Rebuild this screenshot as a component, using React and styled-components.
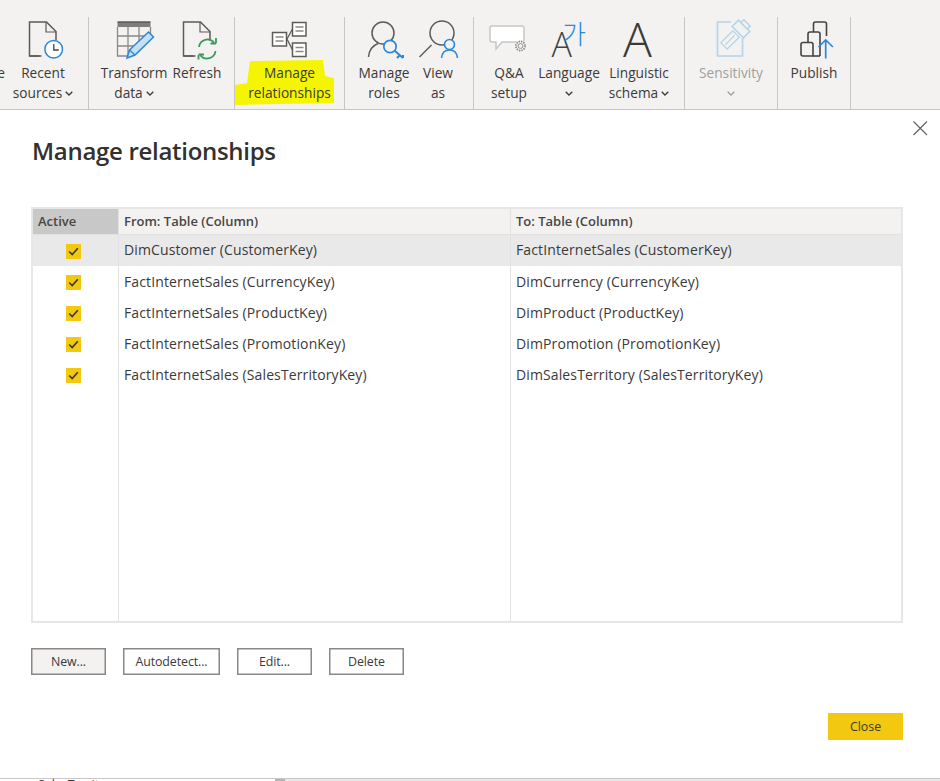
import React from "react";
import styled, { createGlobalStyle } from "styled-components";

const Global = createGlobalStyle`
  html, body { margin: 0; padding: 0; background: #fff; }
  body { font-family: "Open Sans", "Noto Sans", "Liberation Sans", sans-serif; }
  * { box-sizing: border-box; }
`;

const Page = styled.div`
  width: 940px; height: 781px; overflow: hidden;
  display: flex; flex-direction: column;
`;
const Ribbon = styled.div`
  height: 110px; flex: none; display: flex; align-items: flex-end;
  background: #f3f2f1; border-bottom: 1px solid #c8c6c4;
`;
const Group = styled.div`
  height: 92px; width: ${p => p.$w}px; flex: none;
  display: flex; padding-left: ${p => p.$pad || 0}px;
  border-right: 1px solid #c8c6c4; overflow: hidden;
`;
const Item = styled.div`
  position: relative; flex: none; width: ${p => p.$w}px;
  margin-right: ${p => p.$gap || 0}px;
  display: flex; flex-direction: column; align-items: center;
`;
const IconSvg = styled.svg`
  display: block; flex: none; position: relative; z-index: 1;
  overflow: visible;
`;
const Label = styled.div`
  position: relative; z-index: 1; margin-top: 2.5px;
  font-size: 13.7px; line-height: 20.5px; white-space: nowrap; text-align: center;
  color: ${p => (p.$muted ? "#a19f9d" : "#3b3a39")};
  display: flex; flex-direction: column; align-items: center;
`;
const Line = styled.span`
  display: flex; align-items: center; gap: 3px; height: 20.5px;
`;
const Cut = styled.div`
  flex: none; width: 5px; overflow: hidden; direction: rtl; margin-right: 5px;
  padding-top: 45.5px; font-size: 13.7px; line-height: 20.5px; color: #3b3a39;
`;
const Highlight = styled.svg`
  position: absolute; left: -2px; top: 43px; z-index: 0;
`;
const Dialog = styled.div`
  position: relative; flex: 1; min-height: 0; background: #fff;
  padding: 24px 37px 0 31px; display: flex; flex-direction: column;
`;
const CloseX = styled.svg`
  position: absolute; top: 10px; right: 12px;
`;
const Title = styled.h1`
  margin: 0 0 0 1px; font-size: 24px; line-height: 34px; font-weight: 600;
  letter-spacing: -0.3px; color: #323130;
`;
const Table = styled.div`
  margin-top: 39px; height: 416px; border: 2px solid #e6e6e6;
  display: grid; grid-template-columns: 86px 392px 1fr;
  grid-template-rows: 26px repeat(5, 31px) 1fr;
`;
const Head = styled.div`
  background: ${p => (p.$active ? "#c8c8c8" : "#f3f2f1")};
  border-right: ${p => (p.$last ? "none" : "1px solid #e1e1e1")};
  border-bottom: 1px solid #e1e1e1;
  padding-left: 5px;
  font-size: 13px; font-weight: 600; line-height: 25px; color: #484644;
`;
const Cell = styled.div`
  background: ${p => (p.$sel ? "#e9e9e9" : "#fff")};
  border-right: ${p => (p.$last ? "none" : "1px solid #e1e1e1")};
  padding-left: 5px; font-size: 14px; line-height: ${p => (p.$sel ? 30 : 32)}px; color: #3b3a39;
  white-space: nowrap; letter-spacing: 0.12px;
`;
const CheckCell = styled(Cell)`
  padding: 0; display: flex; align-items: center; justify-content: center;
`;
const Check = styled.div`
  width: 15px; height: 15px; background: #f2c811; margin: 2px 4px 0 0;
  display: flex; align-items: center; justify-content: center;
`;
const Filler = styled.div`
  border-right: ${p => (p.$last ? "none" : "1px solid #e1e1e1")};
`;
const Buttons = styled.div`
  margin-top: 25px; display: flex; gap: 17px;
`;
const Btn = styled.button`
  width: ${p => p.$w}px; height: 27px; padding: 0; flex: none;
  background: ${p => (p.$primary ? "#f3f2f1" : "#fff")};
  border: 1px solid #8a8886; box-shadow: inset 0 0 0 0.5px #8a8886;
  font: 12.4px "Open Sans", sans-serif; color: #3b3a39; letter-spacing: -0.1px;
`;
const Footer = styled.div`
  margin-top: 38px; display: flex; justify-content: flex-end;
`;
const CloseBtn = styled.button`
  width: 75px; height: 27px; padding: 0; border: none; background: #f2c811;
  font: 12.4px "Open Sans", sans-serif; color: #3b3a39;
`;
const BottomStrip = styled.div`
  height: 3px; flex: none; overflow: hidden; display: flex;
  border-top: 1px solid #c8c6c4; background: #fff;
`;
const BottomText = styled.div`
  width: 275px; padding-left: 38px; font-size: 12.4px; line-height: 14px; color: #3b3a39;
  margin-top: -1px; white-space: nowrap;
`;
const BottomThumb = styled.div`width: 10px; background: #b5b5b5;`;
const BottomTrack = styled.div`flex: 1; background: #e8e8e8;`;

const Ic = ({ x, w, children }) => (
  <IconSvg width={w} height={43} viewBox={`${x} 17 ${w} 43`} fill="none">
    {children}
  </IconSvg>
);

const Chevron = ({ color = "#3b3a39" }) => (
  <svg width="8" height="5" viewBox="0 0 8 5" fill="none">
    <path d="M.7.7 4 4 7.3.7" stroke={color} strokeWidth="1.3" />
  </svg>
);

const G = "#5c5b5a";
const B = "#2b88d8";

const Doc = ({ x }) => (
  <>
    <path d={`M${x + 10} 56H${x}V22h17l9.500 9.500v9`} stroke={G} strokeWidth="1.500" />
    <path d={`M${x + 16.500} 22v10h10`} stroke={G} strokeWidth="1.200" />
    <path d={`M${x} 56h12`} stroke={G} strokeWidth="1.500" />
  </>
);

const Row = ({ from, to, sel }) => (
  <>
    <CheckCell $sel={sel}>
      <Check>
        <svg width="11" height="9" viewBox="0 0 11 9" fill="none">
          <path d="M1.200 4.500 4.200 7.500 9.800 1.200" stroke="#3b3a39" strokeWidth="1.700" />
        </svg>
      </Check>
    </CheckCell>
    <Cell $sel={sel}>{from}</Cell>
    <Cell $sel={sel} $last>{to}</Cell>
  </>
);

export default function App() {
  return (
    <Page>
      <Global />
      <Ribbon>
        <Group $w={89}>
          <Cut>e</Cut>
          <Item $w={66}>
            <Ic x={10} w={66}>
              <Doc x={29.500} />
              <circle cx="53.700" cy="49.300" r="8.800" stroke={B} strokeWidth="1.500" fill="#fff" />
              <path d="M53.800 44v6h5" stroke="#444" strokeWidth="1.300" />
            </Ic>
            <Label>
              <Line>Recent</Line>
              <Line>sources<Chevron /></Line>
            </Label>
          </Item>
        </Group>

        <Group $w={146} $pad={12}>
          <Item $w={66} $gap={6}>
            <Ic x={101} w={66}>
              <rect x="117.500" y="22" width="33" height="5" fill="#7f7e7d" />
              <path d="M117.500 27v29H128M150.500 27v8M117.500 36H146M117.500 46H136M128 27v28M139 27v19" stroke="#8a8988" strokeWidth="1.300" />
              <path d="M117.500 22h33" stroke={G} strokeWidth="1.500" />
              <path d="m129.500 50 19-18 5 5-18.500 18-8 3z" fill="#c7e0f4" stroke={B} strokeWidth="1.500" />
              <path d="m129.500 50 5.500 5" stroke={B} strokeWidth="1.300" />
            </Ic>
            <Label>
              <Line>Transform</Line>
              <Line>data<Chevron /></Line>
            </Label>
          </Item>
          <Item $w={48}>
            <Ic x={173} w={48}>
              <Doc x={183.500} />
              <path d="M199 47a8.500 8.500 0 0 1 15-4.500M216 43.500V38M216 43.500h-5.500" stroke="#3a9a5b" strokeWidth="1.800" />
              <path d="M215.500 51a8.500 8.500 0 0 1-15 4.500M198.500 55v4.500M198.500 54.500h5.500" stroke="#3a9a5b" strokeWidth="1.800" />
            </Ic>
            <Label>
              <Line>Refresh</Line>
            </Label>
          </Item>
        </Group>

        <Group $w={110}>
          <Item $w={109}>
            <Highlight width="104" height="46" viewBox="0 0 104 46">
              <path d="M17 1 90 0 92 16 101 18 101 43 1 45 2 25 14 23Z" fill="#f5f500" />
            </Highlight>
            <Ic x={235} w={109}>
              <g stroke={G} strokeWidth="1.500" fill="#fff">
                <rect x="272.500" y="32.500" width="14" height="13.500" />
                <rect x="292.500" y="22.500" width="13.500" height="13.500" />
                <rect x="292.500" y="43" width="13.500" height="13.500" />
              </g>
              <path d="M287 39l5.500-10M287 39l5.500 11" stroke={G} strokeWidth="1.300" />
              <path d="M275.500 37h8M275.500 41h8M295.500 27h8M295.500 31h8M295.500 47.500h8M295.500 51.500h8" stroke="#8a8988" strokeWidth="1.300" />
            </Ic>
            <Label>
              <Line>Manage</Line>
              <Line>relationships</Line>
            </Label>
          </Item>
        </Group>

        <Group $w={129} $pad={12}>
          <Item $w={54} $gap={7}>
            <Ic x={357} w={54}>
              <circle cx="383" cy="33" r="11" stroke={G} strokeWidth="1.500" />
              <path d="M368.500 57c.5-7 4.500-11.500 9.500-13.500" stroke={G} strokeWidth="1.500" />
              <path d="M394 50.500 403 58" stroke="#f3f2f1" strokeWidth="5" />
              <circle cx="390" cy="46.500" r="6.200" fill="#f3f2f1" stroke={B} strokeWidth="1.700" />
              <path d="m394.500 50.500 8.500 7.500M399.500 55.500l-2.500 2.500M403 58v-3" stroke={B} strokeWidth="2" />
            </Ic>
            <Label>
              <Line>Manage</Line>
              <Line>roles</Line>
            </Label>
          </Item>
          <Item $w={40}>
            <Ic x={418} w={40}>
              <circle cx="442" cy="33" r="12" stroke={G} strokeWidth="1.500" />
              <path d="m419.500 57 12-12" stroke={G} strokeWidth="1.500" />
              <circle cx="449.500" cy="44.500" r="5" fill="#f3f2f1" stroke={B} strokeWidth="1.600" />
              <path d="M441.500 58c.5-5 3.500-8 8-8s7.500 3 8 8" stroke={B} strokeWidth="1.600" />
            </Ic>
            <Label>
              <Line>View</Line>
              <Line>as</Line>
            </Label>
          </Item>
        </Group>

        <Group $w={211} $pad={15}>
          <Item $w={40} $gap={7}>
            <Ic x={489} w={40}>
              <path d="M492 26h30a2 2 0 0 1 2 2v12a2 2 0 0 1-2 2h-20l-6 7v-7h-4a2 2 0 0 1-2-2V28a2 2 0 0 1 2-2Z" stroke="#c8c6c4" strokeWidth="1.500" fill="#fff" />
              <circle cx="520.500" cy="46" r="6" fill="#f3f2f1" />
              <circle cx="520.500" cy="46" r="4.600" stroke="#8a8886" strokeWidth="1.700" strokeDasharray="1.400 1" />
              <circle cx="520.500" cy="46" r="2.400" stroke="#8a8886" strokeWidth=".9" />
            </Ic>
            <Label>
              <Line>Q&amp;A</Line>
              <Line>setup</Line>
            </Label>
          </Item>
          <Item $w={66} $gap={4}>
            <Ic x={536} w={66}>
              <text x="551.500" y="57" fontFamily="'Open Sans', sans-serif" fontWeight="300" fontSize="34" fill="#444">A</text>
              <text x="562" y="44" fontFamily="'Noto Sans CJK KR', sans-serif" fontWeight="300" fontSize="26" fill={B}>가</text>
            </Ic>
            <Label>
              <Line>Language</Line>
              <Line><Chevron /></Line>
            </Label>
          </Item>
          <Item $w={66}>
            <Ic x={606} w={66}>
              <text x="623" y="57" fontFamily="'Open Sans', sans-serif" fontWeight="300" fontSize="48" fill="#3b3a39">A</text>
            </Ic>
            <Label>
              <Line>Linguistic</Line>
              <Line>schema<Chevron /></Line>
            </Label>
          </Item>
        </Group>

        <Group $w={93}>
          <Item $w={92}>
            <Ic x={685} w={92}>
              <path d="M731 22h-13.500v34h25V38" stroke="#b3d4ea" strokeWidth="1.700" />
              <g transform="rotate(-45 730 40)" stroke="#b3d4ea" strokeWidth="1.300" fill="#f3f2f1">
                <rect x="721.500" y="35.500" width="17" height="9" />
                <path d="M723.500 40h13" />
              </g>
              <g transform="rotate(45 741 29)" stroke="#b3d4ea" strokeWidth="1.500" fill="#f3f2f1">
                <rect x="733" y="24.500" width="16" height="9" />
                <rect x="736.500" y="20.500" width="9" height="4" />
              </g>
            </Ic>
            <Label $muted>
              <Line>Sensitivity</Line>
              <Line><Chevron color="#a19f9d" /></Line>
            </Label>
          </Item>
        </Group>

        <Group $w={73}>
          <Item $w={72}>
            <Ic x={778} w={72}>
              <g stroke="#444" strokeWidth="1.600" fill="#f3f2f1">
                <path d="M813.500 36V24a2 2 0 0 1 2-2h9a2 2 0 0 1 2 2v12" />
                <path d="M808 42v-8a2 2 0 0 1 2-2h8a2 2 0 0 1 2 2v22" />
                <path d="M803 42.500h8a2 2 0 0 1 2 2V56h-10a2 2 0 0 1-2-2v-9.500a2 2 0 0 1 2-2Z" />
                <path d="M813 56h7" />
              </g>
              <path d="M825.700 41v17.500M818.500 47l7.200-7 7.200 7" stroke={B} strokeWidth="1.700" />
            </Ic>
            <Label>
              <Line>Publish</Line>
            </Label>
          </Item>
        </Group>
      </Ribbon>

      <Dialog>
        <CloseX width="16" height="16" viewBox="0 0 16 16" fill="none">
          <path d="M1.500 1.500 15 15M15 1.500 1.500 15" stroke="#605e5c" strokeWidth="1.100" />
        </CloseX>
        <Title>Manage relationships</Title>
        <Table>
          <Head $active>Active</Head>
          <Head>From: Table (Column)</Head>
          <Head $last>To: Table (Column)</Head>
          <Row sel from="DimCustomer (CustomerKey)" to="FactInternetSales (CustomerKey)" />
          <Row from="FactInternetSales (CurrencyKey)" to="DimCurrency (CurrencyKey)" />
          <Row from="FactInternetSales (ProductKey)" to="DimProduct (ProductKey)" />
          <Row from="FactInternetSales (PromotionKey)" to="DimPromotion (PromotionKey)" />
          <Row from="FactInternetSales (SalesTerritoryKey)" to="DimSalesTerritory (SalesTerritoryKey)" />
          <Filler />
          <Filler />
          <Filler $last />
        </Table>
        <Buttons>
          <Btn $w={75} $primary>New...</Btn>
          <Btn $w={97}>Autodetect...</Btn>
          <Btn $w={75}>Edit...</Btn>
          <Btn $w={75}>Delete</Btn>
        </Buttons>
        <Footer>
          <CloseBtn>Close</CloseBtn>
        </Footer>
      </Dialog>
      <BottomStrip>
        <BottomText>SalesTerritory</BottomText>
        <BottomThumb />
        <BottomTrack />
      </BottomStrip>
    </Page>
  );
}
